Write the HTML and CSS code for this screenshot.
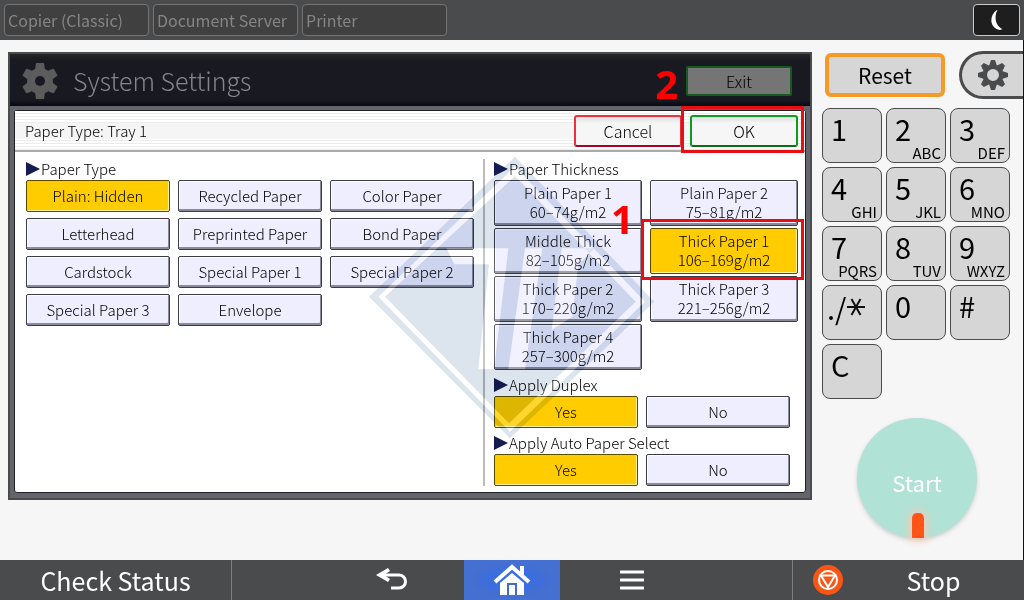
FILE: index.html
```
<!DOCTYPE html>
<html lang="en">
<head>
    <meta charset="UTF-8">
    <meta name="viewport" content="width=device-width, initial-scale=1.0">
    <title>System Settings</title>
    <link rel="stylesheet" href="styles.css">
</head>
<body>
    <header class="topbar">
        <button class="app-tab">Copier (Classic)</button>
        <button class="app-tab">Document Server</button>
        <button class="app-tab">Printer</button>
        <button class="sleep" aria-label="Sleep">
            <svg width="14" height="22" viewBox="0 0 14 22"><path d="M7 1C-1 6-1 19 10 21L12.500 20C5 17 4 7 7.500 1Z" fill="#fff"/></svg>
        </button>
    </header>

    <main class="main">
        <section class="panel">
            <div class="panel-head">
                <svg class="head-gear" width="36" height="36" viewBox="-18 -18 36 36">
                    <g fill="#5c5c5c">
                        <circle r="13"/>
                        <path id="tooth" d="M-5-11L-4-18H4L5-11Z"/>
                        <use href="#tooth" transform="rotate(60)"/>
                        <use href="#tooth" transform="rotate(120)"/>
                        <use href="#tooth" transform="rotate(180)"/>
                        <use href="#tooth" transform="rotate(240)"/>
                        <use href="#tooth" transform="rotate(300)"/>
                    </g>
                    <circle r="5" fill="#191921"/>
                </svg>
                <h1>System Settings</h1>
                <button class="exit">Exit</button>
                <span class="step step-two">2</span>
            </div>

            <div class="sheet">
                <div class="strip">
                    <h2>Paper Type: Tray 1</h2>
                    <button class="action cancel">Cancel</button>
                    <div class="marked">
                        <button class="action ok">OK</button>
                        <span class="frame"></span>
                    </div>
                </div>

                <div class="columns">
                    <div class="types">
                        <h3>Paper Type</h3>
                        <div class="type-grid">
                            <button class="opt selected">Plain: Hidden</button>
                            <button class="opt">Recycled Paper</button>
                            <button class="opt">Color Paper</button>
                            <button class="opt">Letterhead</button>
                            <button class="opt">Preprinted Paper</button>
                            <button class="opt">Bond Paper</button>
                            <button class="opt">Cardstock</button>
                            <button class="opt">Special Paper 1</button>
                            <button class="opt">Special Paper 2</button>
                            <button class="opt">Special Paper 3</button>
                            <button class="opt">Envelope</button>
                        </div>
                    </div>

                    <div class="details">
                        <h3>Paper Thickness</h3>
                        <div class="thick-grid">
                            <button class="opt tall">Plain Paper 1<br>60–74g/m2</button>
                            <button class="opt tall">Plain Paper 2<br>75–81g/m2</button>
                            <button class="opt tall">Middle Thick<br>82–105g/m2</button>
                            <div class="marked">
                                <button class="opt tall selected">Thick Paper 1<br>106–169g/m2</button>
                                <span class="frame"></span>
                                <span class="step step-one">1</span>
                            </div>
                            <button class="opt tall">Thick Paper 2<br>170–220g/m2</button>
                            <button class="opt tall">Thick Paper 3<br>221–256g/m2</button>
                            <button class="opt tall">Thick Paper 4<br>257–300g/m2</button>
                        </div>
                        <h3>Apply Duplex</h3>
                        <div class="yes-no">
                            <button class="opt selected">Yes</button>
                            <button class="opt">No</button>
                        </div>
                        <h3>Apply Auto Paper Select</h3>
                        <div class="yes-no">
                            <button class="opt selected">Yes</button>
                            <button class="opt">No</button>
                        </div>
                    </div>
                </div>
            </div>

            <svg class="watermark" width="300" height="295" viewBox="0 0 900 885">
                <g fill="#dce4ee" fill-rule="evenodd">
                    <path d="M450 20L868 455L435 865L12 440ZM450 50L40 440L435 845L840 455Z"/>
                    <path d="M450 78L812 455L432 820L60 440ZM245 295L268 343H372L340 658H387L430 295ZM480 295L430 658H480L532 295ZM590 295L560 540L622 500L640 343L690 295Z"/>
                </g>
            </svg>
            <svg class="watermark shine" width="300" height="295" viewBox="0 0 900 885">
                <g fill="#fff" fill-opacity="0.18" fill-rule="evenodd">
                    <path d="M450 50L840 455L435 845L40 440ZM450 78L60 440L432 820L812 455Z"/>
                    <path d="M245 295L268 343H372L340 658H387L430 295ZM480 295L430 658H480L532 295ZM590 295L560 540L622 500L640 343L690 295Z"/>
                </g>
            </svg>
        </section>

        <aside class="side">
            <div class="side-top">
                <button class="reset">Reset</button>
                <button class="tools" aria-label="User tools">
                    <svg width="30" height="30" viewBox="-15 -15 30 30">
                        <g fill="#4a4b4d">
                            <path d="M0-10A10 10 0 1 0 0 10A10 10 0 1 0 0-10ZM0-6A6 6 0 1 1 0 6A6 6 0 1 1 0-6Z" fill-rule="evenodd"/>
                            <path id="cog" d="M-4-9L-2-15H2L4-9Z"/>
                            <use href="#cog" transform="rotate(45)"/>
                            <use href="#cog" transform="rotate(90)"/>
                            <use href="#cog" transform="rotate(135)"/>
                            <use href="#cog" transform="rotate(180)"/>
                            <use href="#cog" transform="rotate(225)"/>
                            <use href="#cog" transform="rotate(270)"/>
                            <use href="#cog" transform="rotate(315)"/>
                        </g>
                    </svg>
                </button>
            </div>

            <div class="keypad">
                <button class="key">1</button>
                <button class="key">2<small>ABC</small></button>
                <button class="key">3<small>DEF</small></button>
                <button class="key">4<small>GHI</small></button>
                <button class="key">5<small>JKL</small></button>
                <button class="key">6<small>MNO</small></button>
                <button class="key">7<small>PQRS</small></button>
                <button class="key">8<small>TUV</small></button>
                <button class="key">9<small>WXYZ</small></button>
                <button class="key key-star">./<svg width="20" height="20" viewBox="0 0 20 20"><path d="M1 10H19M5.500 2L14.500 18M14.500 2L5.500 18" stroke="#111" stroke-width="2"/></svg></button>
                <button class="key">0</button>
                <button class="key">#</button>
                <button class="key">C</button>
            </div>

            <button class="start">Start<span class="led"></span></button>
        </aside>
    </main>

    <footer class="bottombar">
        <button class="status">Check Status</button>
        <nav class="nav">
            <button class="nav-btn" aria-label="Back">
                <svg width="32" height="24" viewBox="0 0 32 24">
                    <path d="M6 7H23A6.500 6.500 0 0 1 23 20H15" fill="none" stroke="#fff" stroke-width="3"/>
                    <path d="M0 7L12 0L14 3L8 7L14 11L12 14Z" fill="#fff"/>
                </svg>
            </button>
            <button class="nav-btn home" aria-label="Home">
                <svg width="38" height="32" viewBox="0 0 38 32">
                    <path d="M2 18L19 3L36 18" fill="none" stroke="#fff" stroke-width="4"/>
                    <path d="M27 2H31V14L27 10Z" fill="#fff"/>
                    <path d="M19 9L31 19V31H7V19Z" fill="#fff"/>
                    <path d="M15 31V20H23V31" fill="none" stroke="#3f6cd0" stroke-width="2"/>
                </svg>
            </button>
            <button class="nav-btn" aria-label="Menu">
                <svg width="24" height="20" viewBox="0 0 24 20"><path d="M0 2H24M0 10H24M0 18H24" stroke="#fff" stroke-width="3"/></svg>
            </button>
        </nav>
        <button class="stop">
            <svg width="30" height="30" viewBox="0 0 30 30">
                <circle cx="15" cy="15" r="15" fill="#fb5516"/>
                <circle cx="15" cy="15" r="9" fill="none" stroke="#fff" stroke-width="2"/>
                <path d="M8 10.500H22L15 22Z" fill="none" stroke="#fff" stroke-width="2"/>
            </svg>
            <span>Stop</span>
        </button>
    </footer>
</body>
</html>
```
FILE: styles.css
```
* {
    box-sizing: border-box;
}

body {
    margin: 0;
    min-height: 100vh;
    display: flex;
    flex-direction: column;
    background-color: #f6f6f6;
    color: #000;
    font-family: "Noto Sans CJK JP", "Noto Sans", sans-serif;
}

button {
    margin: 0;
    padding: 0;
    border: none;
    background: none;
    font: inherit;
    color: inherit;
    cursor: pointer;
}

h1, h2, h3 {
    margin: 0;
    font-weight: 300;
}

svg {
    display: block;
}

/* top bar */
.topbar {
    display: flex;
    align-items: center;
    gap: 4px;
    height: 40px;
    padding: 0 4px;
    background-color: #4a4b4d;
}

.app-tab {
    width: 145px;
    height: 32px;
    padding-left: 3px;
    border: 1px solid #747474;
    border-radius: 4px;
    background-color: #404040;
    color: #858585;
    font-size: 16px;
    line-height: 28px;
    text-align: left;
    white-space: nowrap;
}

.sleep {
    display: flex;
    align-items: center;
    justify-content: center;
    width: 47px;
    height: 32px;
    margin-left: auto;
    border: 1px solid #ccc;
    border-radius: 4px;
    background-color: #1e1e1f;
}

.main {
    flex: 1;
    display: flex;
    align-items: flex-start;
    padding: 12px 0 0 8px;
}

/* settings panel */
.panel {
    position: relative;
    flex: 1;
    border: 2px solid #4a4b4d;
    background-color: #64646c;
    font-weight: 300;
}

.panel-head {
    position: relative;
    display: flex;
    align-items: center;
    height: 52px;
    padding: 2px 18px 0 12px;
    background: linear-gradient(#25262a, #191921 6px, #191921 46px, #080814);
}

.panel-head h1 {
    flex: 1;
    padding: 0 0 3px 15px;
    color: #85858c;
    font-size: 25px;
    line-height: 36px;
}

.exit {
    width: 106px;
    height: 30px;
    border: 2px solid #16591f;
    border-radius: 2px;
    background-color: #757575;
    font-size: 16px;
    line-height: 24px;
}

.sheet {
    margin: 4px 4px 5px;
    border: 1px solid #202026;
    border-radius: 3px;
    background-color: #fff;
}

.strip {
    display: flex;
    align-items: center;
    gap: 8px;
    height: 41px;
    padding: 0 7px 0 10px;
    border-bottom: 2px solid #aaa;
    background: linear-gradient(transparent 12px, #f5f5f5 12px, #f5f5f5 28px, transparent 28px), repeating-linear-gradient(#fff 0, #fff 2px, #ececec 2px, #ececec 3px);
}

.strip h2 {
    flex: 1;
    font-size: 15px;
    line-height: 24px;
}

.action {
    display: block;
    width: 108px;
    height: 32px;
    border-radius: 3px;
    background: linear-gradient(#dddde2, #f6f6f6 6px);
    font-size: 16px;
    line-height: 26px;
}

.cancel {
    border: 2px solid #e8323c;
    border-bottom-color: #a80028;
}

.ok {
    border: 2px solid #109a22;
    border-bottom-color: #087012;
}

.columns {
    display: grid;
    grid-template-columns: 47fr 32fr;
    padding: 7px 0 6px;
}

h3 {
    display: flex;
    align-items: center;
    gap: 1px;
    height: 21px;
    padding-bottom: 2px;
    font-size: 15px;
    line-height: 20px;
}

h3::before {
    content: "";
    width: 0;
    border: solid transparent;
    border-width: 7px 0 7px 14px;
    border-left-color: #141c50;
}

.types {
    padding: 0 9px 0 11px;
    border-right: 2px solid #bbb;
}

.type-grid {
    display: grid;
    grid-template-columns: repeat(3, 1fr);
    gap: 6px 8px;
}

.details {
    padding: 0 7px 0 9px;
}

.thick-grid {
    display: grid;
    grid-template-columns: 1fr 1fr;
    gap: 2px 8px;
    margin-bottom: 5px;
}

.yes-no {
    display: grid;
    grid-template-columns: 1fr 1fr;
    gap: 8px;
    padding-right: 8px;
    margin-bottom: 5px;
}

.yes-no:last-child {
    margin-bottom: 0;
}

.opt {
    display: block;
    width: 100%;
    height: 32px;
    border: 1px solid #3c3c48;
    border-radius: 2px;
    background-color: #eeeeff;
    box-shadow: inset -1px -2px #8a8a9a, inset 1px 1px #fff;
    font-size: 15px;
    line-height: 24px;
}

.tall {
    height: 46px;
    padding-bottom: 2px;
    line-height: 19px;
}

.selected {
    border-color: #5c4a00;
    background-color: #ffcc00;
    box-shadow: inset -1px -1px #fff3a0;
}

/* numbered steps over the controls */
.marked {
    position: relative;
}

.frame {
    position: absolute;
    inset: -9px -6px -6px -9px;
    border: 3px solid #e60f14;
    pointer-events: none;
}

.step {
    position: absolute;
    color: #ff0000;
    font-family: "Open Sans", sans-serif;
    font-size: 40px;
    font-weight: 700;
    line-height: 40px;
}

.step-one {
    left: -39px;
    top: -29px;
}

.step-two {
    right: 132px;
    top: 10px;
}

.watermark {
    position: absolute;
    left: 355px;
    top: 96px;
    mix-blend-mode: multiply;
    pointer-events: none;
}

.shine {
    mix-blend-mode: normal;
}

/* keypad side */
.side {
    width: 212px;
    align-self: stretch;
    margin-top: -12px;
    padding: 11px 0 0 10px;
    border-right: 1px solid #111;
}

.side-top {
    display: flex;
    align-items: center;
    justify-content: space-between;
    padding-left: 3px;
}

.reset {
    width: 120px;
    height: 44px;
    border: 4px solid #f59a26;
    border-radius: 6px;
    background-color: #d6d6d6;
    font-size: 21px;
    line-height: 32px;
}

.tools {
    display: flex;
    align-items: center;
    width: 64px;
    height: 48px;
    padding-left: 16px;
    border: 3px solid #4a4b4d;
    border-right: none;
    border-radius: 24px 0 0 24px;
    background-color: #d6d6d6;
}

.keypad {
    display: grid;
    grid-template-columns: repeat(3, 60px);
    grid-auto-rows: 55px;
    gap: 4px;
    margin-top: 9px;
}

.key {
    position: relative;
    display: flex;
    padding: 4px 8px;
    border: 1px solid #4a4b4d;
    border-radius: 8px;
    background-color: #d6d6d6;
    font-size: 29px;
    line-height: 30px;
}

.key small {
    position: absolute;
    right: 4px;
    bottom: 0;
    font-size: 15px;
    line-height: 18px;
}

.key-star {
    align-items: center;
    padding: 0 0 12px 4px;
}

.start {
    position: relative;
    display: block;
    width: 120px;
    height: 120px;
    margin: 19px 0 0 35px;
    padding-top: 8px;
    border-radius: 50%;
    background-color: #b0e2d6;
    box-shadow: 0 2px 4px #ccc;
    color: #fff;
    font-size: 22px;
}

.led {
    position: absolute;
    left: 55px;
    bottom: 0;
    width: 12px;
    height: 25px;
    border-radius: 5px 5px 0 0;
    background-color: #ff5518;
    box-shadow: 0 0 10px 2px #ffc8b0;
}

/* bottom bar */
.bottombar {
    display: flex;
    height: 40px;
    background-color: #4a4b4d;
    color: #fff;
    font-size: 25px;
    line-height: 40px;
}

.status {
    width: 232px;
    border-right: 1px solid #808080;
}

.nav {
    flex: 1;
    display: flex;
    justify-content: center;
}

.nav-btn {
    display: flex;
    align-items: center;
    justify-content: center;
    width: 144px;
}

.home {
    width: 96px;
    background: radial-gradient(#2f6cf0, #456fd0 60%);
}

.stop {
    display: flex;
    align-items: center;
    width: 232px;
    padding-left: 20px;
    border-left: 1px solid #808080;
}

.stop span {
    flex: 1;
}
```
